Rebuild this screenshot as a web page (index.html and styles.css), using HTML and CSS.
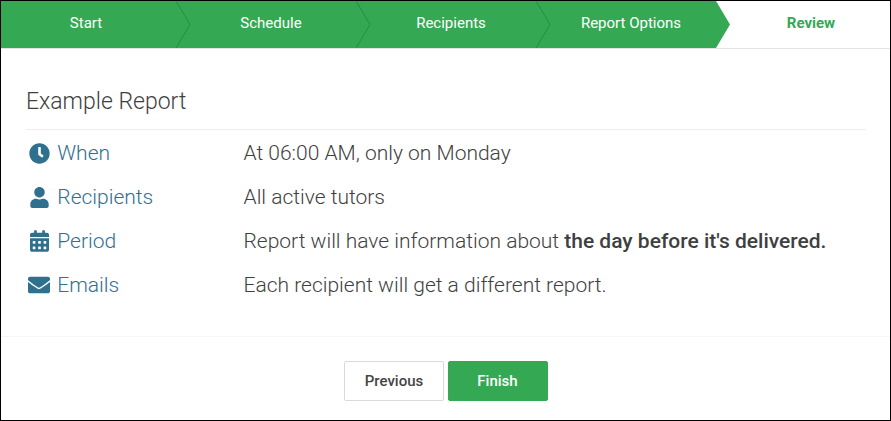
FILE: index.html
```html
<!DOCTYPE html>
<html lang="en">
<head>
    <meta charset="UTF-8">
    <meta name="viewport" content="width=device-width, initial-scale=1.0">
    <title>Example Report</title>
    <link rel="stylesheet" href="styles.css">
</head>
<body>
<div class="wizard">
    <!-- steps bar -->
    <div class="steps">
        <div class="step step-first">Start
            <svg class="arrow" viewBox="0 0 15 47"><path d="M0 0L14 23.5L0 47"/></svg>
        </div>
        <div class="step">Schedule
            <svg class="arrow" viewBox="0 0 15 47"><path d="M0 0L14 23.5L0 47"/></svg>
        </div>
        <div class="step">Recipients
            <svg class="arrow" viewBox="0 0 15 47"><path d="M0 0L14 23.5L0 47"/></svg>
        </div>
        <div class="step">Report Options
            <svg class="arrow arrow-solid" viewBox="0 0 15 47"><path d="M0 0L14 23.5L0 47"/></svg>
        </div>
        <div class="step step-active">Review</div>
    </div>

    <div class="content">
        <h2 class="title">Example Report</h2>
        <div class="row">
            <div class="label">
                <span class="icon"><svg width="21" height="21" viewBox="0 0 512 512"><path d="M256,8C119,8,8,119,8,256S119,504,256,504,504,393,504,256,393,8,256,8Zm92.49,313h0l-20,25a16,16,0,0,1-22.49,2.5h0l-67-49.72a40,40,0,0,1-15-31.23V112a16,16,0,0,1,16-16h32a16,16,0,0,1,16,16V256l58,42.5A16,16,0,0,1,348.49,321Z"/></svg></span>
                When
            </div>
            <div class="value">At 06:00 AM, only on Monday</div>
        </div>
        <div class="row">
            <div class="label">
                <span class="icon"><svg width="19" height="21" viewBox="0 0 448 512"><path d="M224 256c70.7 0 128-57.3 128-128S294.7 0 224 0 96 57.3 96 128s57.3 128 128 128zm89.6 32h-16.7c-22.2 10.2-46.9 16-72.9 16s-50.6-5.8-72.9-16h-16.7C60.2 288 0 348.2 0 422.4V464c0 26.5 21.5 48 48 48h352c26.5 0 48-21.5 48-48v-41.6c0-74.2-60.2-134.4-134.4-134.4z"/></svg></span>
                Recipients
            </div>
            <div class="value">All active tutors</div>
        </div>
        <div class="row">
            <div class="label">
                <span class="icon"><svg width="19" height="22" viewBox="0 0 448 512"><path d="M0 464c0 26.5 21.5 48 48 48h352c26.5 0 48-21.5 48-48V192H0v272zm320-196c0-6.6 5.4-12 12-12h40c6.6 0 12 5.4 12 12v40c0 6.6-5.4 12-12 12h-40c-6.6 0-12-5.4-12-12v-40zm0 128c0-6.6 5.4-12 12-12h40c6.6 0 12 5.4 12 12v40c0 6.6-5.4 12-12 12h-40c-6.6 0-12-5.4-12-12v-40zM192 268c0-6.6 5.4-12 12-12h40c6.6 0 12 5.4 12 12v40c0 6.6-5.4 12-12 12h-40c-6.6 0-12-5.4-12-12v-40zm0 128c0-6.6 5.4-12 12-12h40c6.6 0 12 5.4 12 12v40c0 6.6-5.4 12-12 12h-40c-6.6 0-12-5.4-12-12v-40zM64 268c0-6.6 5.4-12 12-12h40c6.6 0 12 5.4 12 12v40c0 6.6-5.4 12-12 12H76c-6.6 0-12-5.4-12-12v-40zm0 128c0-6.6 5.4-12 12-12h40c6.6 0 12 5.4 12 12v40c0 6.6-5.4 12-12 12H76c-6.6 0-12-5.4-12-12v-40zM400 64h-48V16c0-8.8-7.2-16-16-16h-32c-8.8 0-16 7.2-16 16v48H160V16c0-8.8-7.2-16-16-16h-32c-8.8 0-16 7.2-16 16v48H48C21.5 64 0 85.5 0 112v48h448v-48c0-26.5-21.5-48-48-48z"/></svg></span>
                Period
            </div>
            <div class="value">Report will have information about <b>the day before it's delivered.</b></div>
        </div>
        <div class="row">
            <div class="label">
                <span class="icon"><svg width="22" height="22" viewBox="0 0 512 512"><path d="M502.3 190.8c3.9-3.1 9.7-.2 9.7 4.7V400c0 26.5-21.5 48-48 48H48c-26.5 0-48-21.5-48-48V195.6c0-5 5.7-7.8 9.7-4.7 22.4 17.4 52.1 39.5 154.1 113.6 21.1 15.4 56.7 47.8 92.2 47.6 35.7.3 72-32.8 92.3-47.6 102-74.1 131.6-96.3 154-113.7zM256 320c23.2.4 56.6-29.2 73.4-41.4 132.7-96.3 142.8-104.7 173.4-128.7 5.8-4.5 9.2-11.5 9.2-18.9v-19c0-26.5-21.5-48-48-48H48C21.5 64 0 85.5 0 112v19c0 7.4 3.4 14.3 9.2 18.9 30.6 23.9 40.7 32.4 173.4 128.7 16.8 12.2 50.2 41.8 73.4 41.4z"/></svg></span>
                Emails
            </div>
            <div class="value">Each recipient will get a different report.</div>
        </div>
    </div>

    <div class="footer">
        <button class="btn">Previous</button>
        <button class="btn btn-green">Finish</button>
    </div>
</div>
</body>
</html>
```

FILE: styles.css
```css
* {
    box-sizing: border-box;
}
body {
    margin: 0;
    font-family: Roboto, Arial, sans-serif;
    background-color: white;
}
.wizard {
    width: 891px;
    height: 421px;
    border: 1px solid black;
    overflow: hidden;
}
.steps {
    display: flex;
    height: 48px;
    border-bottom: 1px solid #e3e3e3;
}
.step {
    position: relative;
    display: flex;
    justify-content: center;
    align-items: center;
    width: 180px;
    height: 47px;
    padding-left: 10px;
    padding-bottom: 3px;
    font-size: 15px;
    color: white;
    background-color: #34a853;
}
.step-first {
    width: 175px;
    padding-left: 0;
    padding-right: 5px;
}
.step-active {
    width: 173px;
    padding-left: 17px;
    font-weight: bold;
    color: #34a853;
    background-color: white;
}
.arrow {
    position: absolute;
    top: 0;
    left: 100%;
    z-index: 1;
    width: 15px;
    height: 47px;
}
.arrow path {
    fill: #34a853;
    stroke: #2b8c45;
    stroke-width: 1;
}
.arrow-solid path {
    stroke: none;
}
.content {
    height: 288px;
    padding: 0 24px 0 25px;
    border-bottom: 1px solid #f6f6f6;
}
.title {
    margin: 0 0 1px;
    height: 81px;
    padding-top: 40px;
    padding-bottom: 6px;
    border-bottom: 1px solid #eceef1;
    font-size: 23px;
    line-height: 26px;
    font-weight: 300;
    color: #3f3f3f;
}
.row {
    display: flex;
    align-items: center;
    height: 44px;
    font-size: 21px;
    font-weight: 300;
}
.label {
    display: flex;
    align-items: center;
    width: 217.5px;
    color: #30708f;
}
.icon {
    display: flex;
    justify-content: center;
    width: 26px;
    margin-right: 5.3px;
}
.icon svg {
    fill: #30708f;
}
.value {
    color: #3f3f3f;
}
.value b {
    font-weight: 500;
}
.footer {
    display: flex;
    justify-content: center;
    gap: 4px;
    padding-top: 24px;
}
.btn {
    width: 100px;
    height: 40px;
    padding: 0 0 0 1px;
    font-family: Roboto, Arial, sans-serif;
    font-size: 15px;
    font-weight: 500;
    color: #444;
    background-color: white;
    border: 1px solid #d9d9d9;
    border-radius: 2px;
}
.btn-green {
    padding: 0;
    color: white;
    background-color: #34a853;
    border-color: #34a853;
}
```
